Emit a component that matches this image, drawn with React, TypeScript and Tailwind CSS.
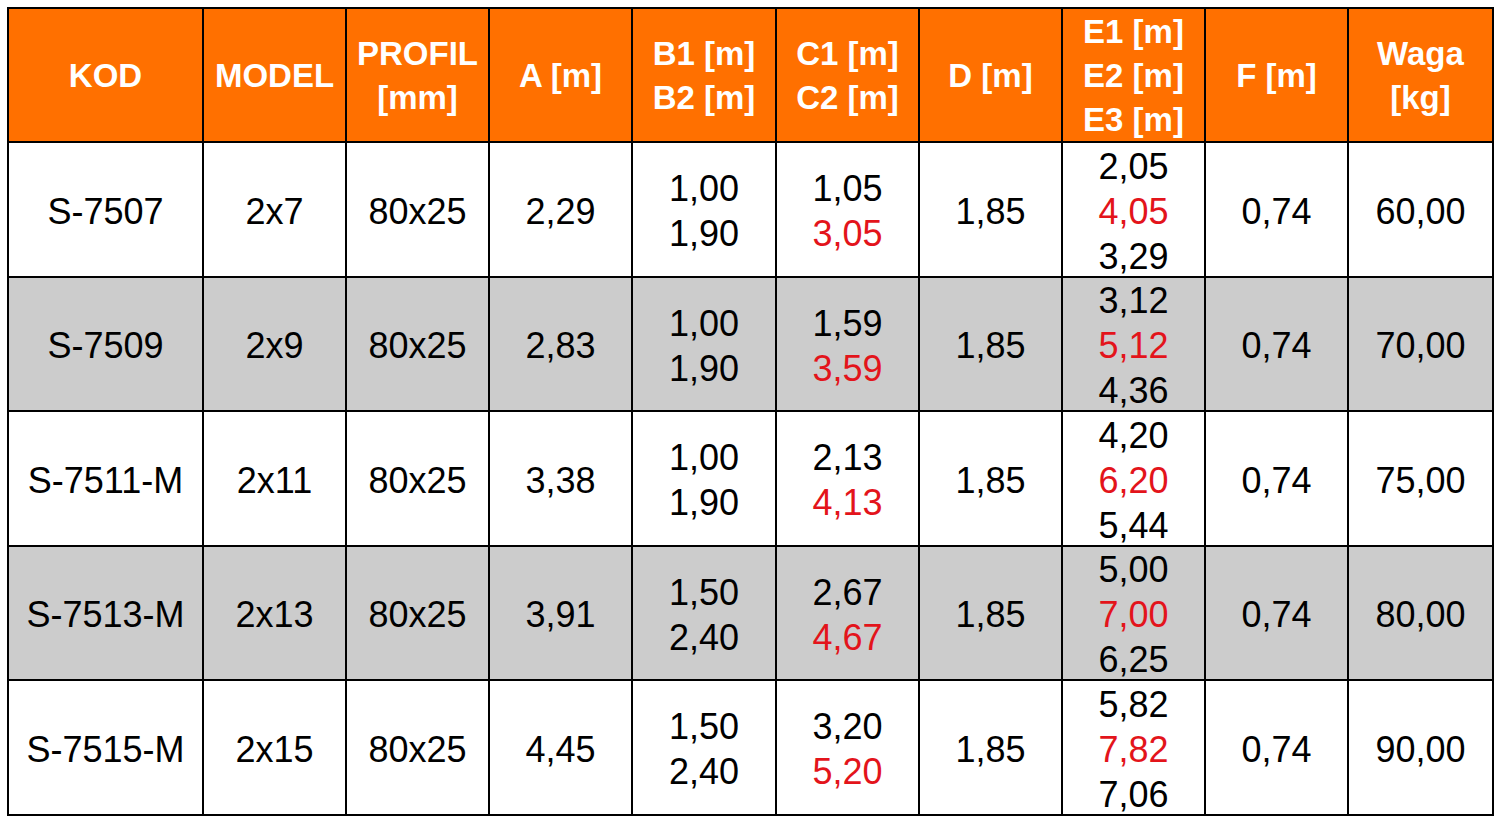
const headers: string[][] = [
  ["KOD"],
  ["MODEL"],
  ["PROFIL", "[mm]"],
  ["A [m]"],
  ["B1 [m]", "B2 [m]"],
  ["C1 [m]", "C2 [m]"],
  ["D [m]"],
  ["E1 [m]", "E2 [m]", "E3 [m]"],
  ["F [m]"],
  ["Waga", "[kg]"],
];

type Row = {
  kod: string;
  model: string;
  a: string;
  b: [string, string];
  c: [string, string];
  e: [string, string, string];
  waga: string;
};

const rows: Row[] = [
  { kod: "S-7507", model: "2x7", a: "2,29", b: ["1,00", "1,90"], c: ["1,05", "3,05"], e: ["2,05", "4,05", "3,29"], waga: "60,00" },
  { kod: "S-7509", model: "2x9", a: "2,83", b: ["1,00", "1,90"], c: ["1,59", "3,59"], e: ["3,12", "5,12", "4,36"], waga: "70,00" },
  { kod: "S-7511-M", model: "2x11", a: "3,38", b: ["1,00", "1,90"], c: ["2,13", "4,13"], e: ["4,20", "6,20", "5,44"], waga: "75,00" },
  { kod: "S-7513-M", model: "2x13", a: "3,91", b: ["1,50", "2,40"], c: ["2,67", "4,67"], e: ["5,00", "7,00", "6,25"], waga: "80,00" },
  { kod: "S-7515-M", model: "2x15", a: "4,45", b: ["1,50", "2,40"], c: ["3,20", "5,20"], e: ["5,82", "7,82", "7,06"], waga: "90,00" },
];

const cols = ["w-[195px]", "w-[143px]", "w-[143px]", "w-[143px]", "w-[144px]", "w-[143px]", "w-[143px]", "w-[143px]", "w-[143px]", "w-[145px]"];

const red = "text-[#e3141b]";
const cell = "border-2 border-black p-0 text-center align-middle whitespace-nowrap";
const body = `${cell} pt-[4px]`;

export default function App() {
  return (
    <div className="min-h-[823px] w-[1500px] bg-white pl-[7px] pt-[7px] font-['Liberation_Sans',Arial,sans-serif]">
      <table className="table-fixed border-collapse border-2 border-black">
        <colgroup>
          {cols.map((c, i) => (
            <col key={i} className={c} />
          ))}
        </colgroup>
        <thead>
          <tr className="h-[134px] bg-[#ff7000]">
            {headers.map((h, i) => (
              <th key={i} className={`${cell} text-[33px] font-bold text-white`}>
                <div className="flex h-[130px] flex-col justify-center pt-[2px] leading-[44px]">
                  {h.map((l, j) => (
                    <div key={j}>{l}</div>
                  ))}
                </div>
              </th>
            ))}
          </tr>
        </thead>
        <tbody>
          {rows.map((r, i) => (
            <tr key={r.kod} className={`h-[134.5px] ${i % 2 === 1 ? "bg-[#cccccc]" : "bg-white"} text-[36px] leading-[45px] text-black`}>
              <td className={body}>{r.kod}</td>
              <td className={body}>{r.model}</td>
              <td className={body}>80x25</td>
              <td className={body}>{r.a}</td>
              <td className={body}>
                <div>{r.b[0]}</div>
                <div>{r.b[1]}</div>
              </td>
              <td className={body}>
                <div>{r.c[0]}</div>
                <div className={red}>{r.c[1]}</div>
              </td>
              <td className={body}>1,85</td>
              <td className={cell}>
                <div className="flex h-[130px] flex-col justify-center pt-[4px]">
                  <div>{r.e[0]}</div>
                  <div className={red}>{r.e[1]}</div>
                  <div>{r.e[2]}</div>
                </div>
              </td>
              <td className={body}>0,74</td>
              <td className={body}>{r.waga}</td>
            </tr>
          ))}
        </tbody>
      </table>
    </div>
  );
}
